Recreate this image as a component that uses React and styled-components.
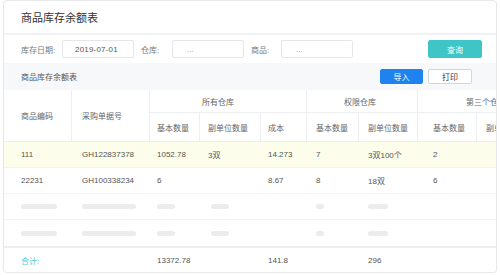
import React from "react";
import styled, { createGlobalStyle } from "styled-components";

const Global = createGlobalStyle`
  html, body { margin: 0; padding: 0; background: #ffffff; }
  body { font-family: "Liberation Sans", "Noto Sans CJK SC", sans-serif; }
  * { box-sizing: border-box; }
`;

const Card = styled.div`
  margin: 0 3px;
  width: 494px;
  height: 273px;
  border: 1px solid #e6e8ec;
  border-radius: 4px;
  overflow: hidden;
  background: #fff;
  display: flex;
  flex-direction: column;
  box-shadow: 0 1px 2px rgba(0, 0, 0, 0.04);
`;

const TitleBar = styled.div`
  height: 32px;
  display: flex;
  align-items: center;
  padding-left: 17px;
  font-size: 11px;
  color: #333;
  border-bottom: 2px solid #f0f2f5;
  height: 34px;
`;

const FilterBar = styled.div`
  height: 28px;
  display: flex;
  align-items: center;
  padding: 0 14px 0 17px;
  gap: 7px;
  font-size: 8px;
`;

const Field = styled.div`
  display: flex;
  align-items: center;
`;

const Label = styled.span`
  width: ${(p) => p.$w}px;
  color: #777;
  white-space: nowrap;
`;

const Input = styled.div`
  width: 72px;
  height: 18px;
  border: 1px solid #e4e6ea;
  border-radius: 2px;
  display: flex;
  align-items: center;
  padding-left: ${(p) => (p.$filled ? 12 : 14)}px;
  color: ${(p) => (p.$filled ? "#555" : "#999")};
  font-size: 8px;
  letter-spacing: ${(p) => (p.$filled ? "0.2px" : "0")};
`;

const Button = styled.div`
  height: ${(p) => p.$h}px;
  width: ${(p) => p.$w}px;
  border-radius: 2px;
  display: flex;
  align-items: center;
  justify-content: center;
  font-size: 8px;
  background: ${(p) => p.$bg};
  color: ${(p) => p.$fg};
  border: 1px solid ${(p) => p.$bd};
`;

const Spacer = styled.div`
  flex: 1;
`;

const Toolbar = styled.div`
  height: 27px;
  background: #f7f8fa;
  display: flex;
  align-items: center;
  padding: 0 24px 0 17px;
  gap: 5px;
  font-size: 8px;
  color: #555;
`;

const COLS = [68, 78, 50, 61, 46, 52, 59, 59, 60, 46];
const PADS = [17, 10, 7, 8, 7, 9, 9, 15, 9, 8];
const template = COLS.map((c) => `${c}px`).join(" ");

const HeaderGrid = styled.div`
  display: grid;
  grid-template-columns: ${template};
  grid-template-rows: 23px 29px;
  font-size: 8px;
  color: #666;
`;

const HCell = styled.div`
  grid-column: ${(p) => p.$col || "auto"};
  grid-row: ${(p) => p.$row || "auto"};
  border-right: 1px solid #eceef1;
  border-bottom: 1px solid #eceef1;
  display: flex;
  align-items: center;
  padding-left: ${(p) => p.$pad}px;
  white-space: nowrap;
`;

const Row = styled.div`
  display: grid;
  grid-template-columns: ${template};
  height: 26px;
  background: ${(p) => (p.$hl ? "#fcfdea" : "#fff")};
  border-bottom: ${(p) => (p.$last ? "none" : "1px solid #f2f3f5")};
  font-size: 8px;
  color: #555;
`;

const TotalRow = styled(Row)`
  border-top: 2px solid #eceef2;
  border-bottom: none;
  height: 26px;
`;

const Cell = styled.div`
  display: flex;
  align-items: center;
  padding-left: ${(p) => p.$pad}px;
  white-space: nowrap;
  color: ${(p) => p.$color || "inherit"};
`;

const Bar = styled.div`
  width: ${(p) => p.$w}px;
  height: 5px;
  border-radius: 3px;
  background: #ececec;
  margin-left: ${(p) => p.$off || 0}px;
`;

const rows = [
  ["111", "GH122837378", "1052.78", "3双", "14.273", "7", "3双100个", "2", "", ""],
  ["22231", "GH100338234", "6", "", "8.67", "8", "18双", "6", "", ""],
];

const skeleton = [
  { w: 36 },
  { w: 54 },
  { w: 18 },
  { w: 18, off: 3 },
  null,
  { w: 8 },
  { w: 20 },
  null,
  null,
  null,
];

const totals = ["合计:", "", "13372.78", "", "141.8", "", "296", "", "", ""];

export default function App() {
  return (
    <>
      <Global />
      <Card>
        <TitleBar>商品库存余额表</TitleBar>
        <FilterBar>
          <Field>
            <Label $w={41}>库存日期:</Label>
            <Input $filled>2019-07-01</Input>
          </Field>
          <Field>
            <Label $w={31}>仓库:</Label>
            <Input>...</Input>
          </Field>
          <Field>
            <Label $w={30}>商品:</Label>
            <Input>...</Input>
          </Field>
          <Spacer />
          <Button $w={54} $h={18} $bg="#40c5c6" $fg="#fff" $bd="#40c5c6">
            查询
          </Button>
        </FilterBar>
        <Toolbar>
          <span>商品库存余额表</span>
          <Spacer />
          <Button $w={43} $h={15} $bg="#1f82ee" $fg="#fff" $bd="#1f82ee">
            导入
          </Button>
          <Button $w={44} $h={15} $bg="#fff" $fg="#333" $bd="#d4d6da">
            打印
          </Button>
        </Toolbar>
        <HeaderGrid>
          <HCell $col="1" $row="1 / span 2" $pad={PADS[0]}>商品编码</HCell>
          <HCell $col="2" $row="1 / span 2" $pad={PADS[1]}>采购单据号</HCell>
          <HCell $col="3 / span 3" $row="1" $pad={52}>所有仓库</HCell>
          <HCell $col="6 / span 2" $row="1" $pad={37}>权限仓库</HCell>
          <HCell $col="8 / span 3" $row="1" $pad={48}>第三个仓库</HCell>
          {["基本数量", "副单位数量", "成本", "基本数量", "副单位数量", "基本数量", "副单位数量", "成本"].map(
            (t, i) => (
              <HCell key={i} $col={`${i + 3}`} $row="2" $pad={PADS[i + 2]}>
                {t}
              </HCell>
            )
          )}
        </HeaderGrid>
        {rows.map((r, ri) => (
          <Row key={ri} $hl={ri === 0}>
            {r.map((v, ci) => (
              <Cell key={ci} $pad={PADS[ci]}>
                {v}
              </Cell>
            ))}
          </Row>
        ))}
        {[0, 1].map((k) => (
          <Row key={`s${k}`} $last={k === 1}>
            {skeleton.map((s, ci) => (
              <Cell key={ci} $pad={PADS[ci]}>
                {s && <Bar $w={s.w} $off={s.off} />}
              </Cell>
            ))}
          </Row>
        ))}
        <TotalRow>
          {totals.map((v, ci) => (
            <Cell key={ci} $pad={PADS[ci]} $color={ci === 0 ? "#4fcfd2" : undefined}>
              {v}
            </Cell>
          ))}
        </TotalRow>
      </Card>
    </>
  );
}
